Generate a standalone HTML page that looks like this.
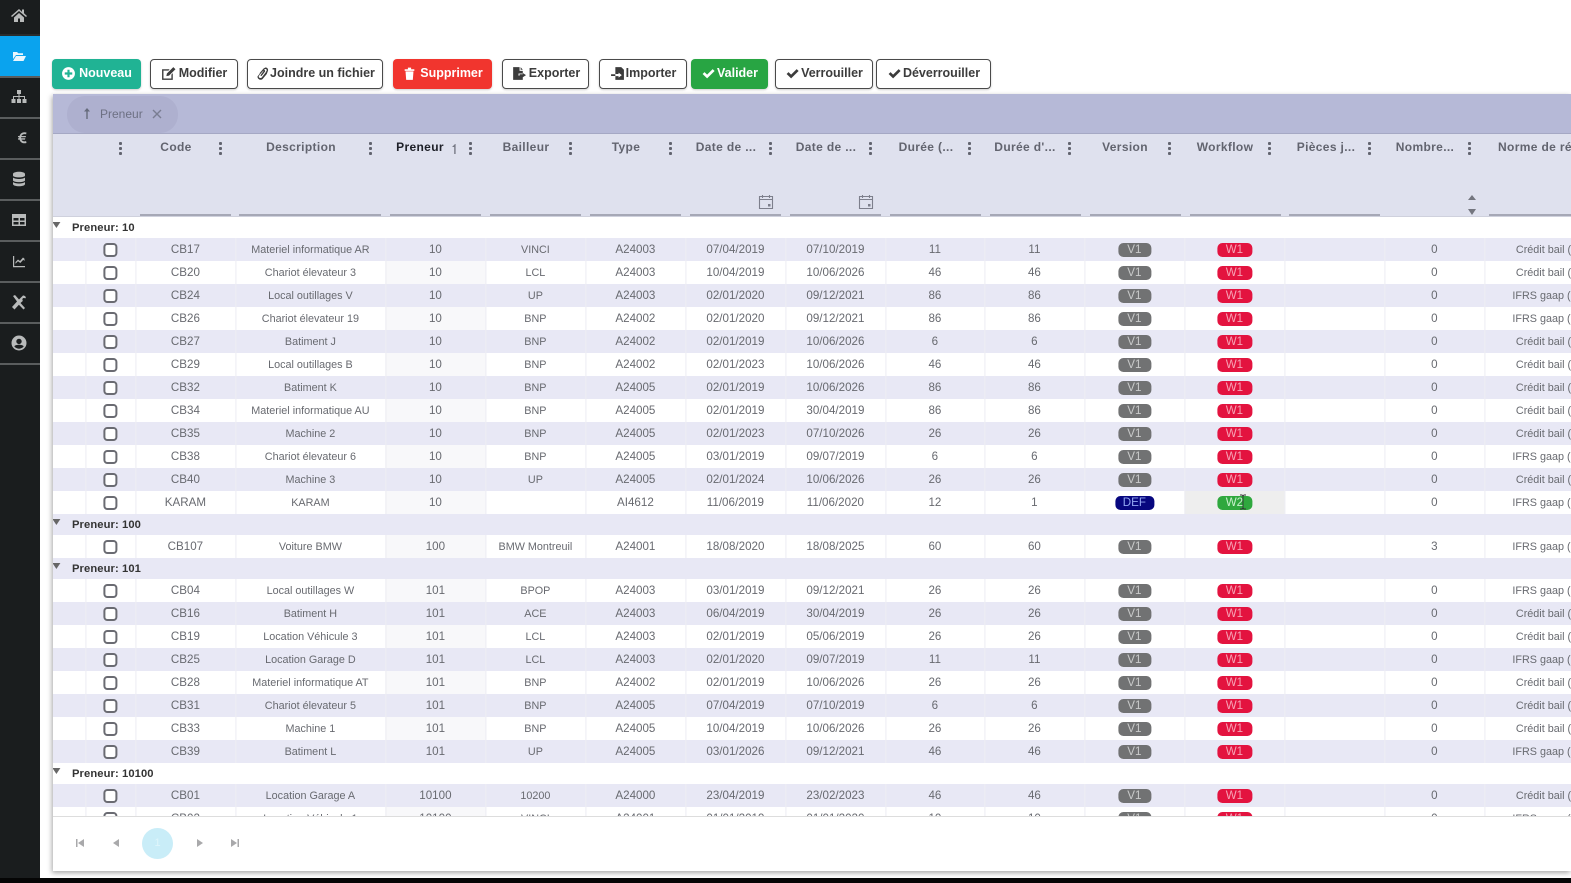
<!DOCTYPE html>
<html lang="fr"><head><meta charset="utf-8"><title>Contrats</title>
<style>
*{box-sizing:border-box}
html,body{margin:0;padding:0;width:1571px;height:883px;overflow:hidden;background:#fff;font-family:"Liberation Sans",sans-serif}
#all{position:absolute;left:0;top:0;width:1571px;height:883px;overflow:hidden;filter:blur(.35px)}
.a{position:absolute}
#side{left:0;top:0;width:40px;height:878px;background:#1a1d1e}
#blue{left:0;top:35px;width:40px;height:42px;background:#0aa3ee}
#foot{left:0;top:878px;width:1571px;height:5px;background:#050505}
#side2 u{position:absolute;left:0;width:40px;height:2px;background:#5a5d5e}
#side2 svg{position:absolute;left:10px;width:18px;height:18px;fill:#b8baba}
.b{position:absolute;top:59px;height:29.500px;padding-bottom:1px;border:1.5px solid #4a4a4a;border-radius:4px;background:#fff;color:#3c3c3c;font:bold 12.5px "Liberation Sans",sans-serif;display:flex;align-items:center;justify-content:center;gap:3px;white-space:nowrap;box-shadow:0 1px 2px rgba(0,0,0,.2)}
.b svg{width:15px;height:15px;fill:currentColor;flex:none}
.f{border:0;color:#fff}
#panel{left:53px;top:94px;width:1518px;height:777px;background:#fff;box-shadow:-1px 2px 5px rgba(0,0,0,.35)}
#band{left:53px;top:94px;width:1518px;height:40px;background:#b6b9d7;border-bottom:1px solid #a5a8c4}
#pill{left:67px;top:96px;width:111px;height:37px;border-radius:18px;background:#aeb0cf}
#hd{left:53px;top:134px;width:1518px;height:83px;background:#dfe1ee;border-bottom:1px solid #cfd1dd}
.h{position:absolute;top:138.500px;font:bold 12px/16px "Liberation Sans",sans-serif;letter-spacing:.35px;color:#62646f;transform:translateX(-50%);white-space:nowrap}
.m{position:absolute;top:142px;width:3px;height:13px;background:radial-gradient(circle at 1.5px 1.5px,#62646f 1.5px,transparent 1.6px) 0 0/3px 5px}
.l{position:absolute;top:214px;height:2px;background:#a6a8b6}
#wrap{left:53px;top:217px;width:1518px;height:600px;overflow:hidden;border-bottom:1px solid #ddd}
table{border-collapse:collapse;table-layout:fixed;width:1700px;font-size:11.6px;color:#686a70;transform:translateX(-.6px)}
td{padding:0;height:23px;text-align:center;white-space:nowrap;border-left:1px solid #ececf2;overflow:visible}
td:first-child{border-left:0}
td:nth-child(4),td:nth-child(6),td.c,td.i{font-size:10.8px}
tr{background:#fff}
tr:nth-child(even){background:#e8e8f5}
tr.g td{height:21px;border:0;text-align:left;font:bold 11.2px "Liberation Sans",sans-serif;letter-spacing:.1px;color:#333;padding:1px 0 0 19.600px;position:relative}
tr.g td:before{content:"";position:absolute;left:0;top:5px;border:4px solid transparent;border-top:6px solid #666;border-bottom:0}
tr:not(:nth-child(even)):not(.g) td:nth-child(5){background:#f8f8fa}
i{display:block;width:14px;height:14px;border:2px solid #6a6b72;border-radius:4px;margin:0 auto;background:#fff}
b{display:inline-block;font-weight:normal;height:14px;line-height:14px;border-radius:5px;font-size:11.6px;vertical-align:middle}
b.v{width:33px;background:#717273;color:#c9caca}
b.w{width:35px;background:#e3133f;color:#f6a3b5}
b.d{width:39px;background:#07077f;color:#93a7f2}
b.x{width:35px;background:#2fa83e;color:#c8efcc}
td.c{text-align:left;padding-left:31px}
td.i{text-align:left;padding-left:27.500px}
.p{position:absolute;fill:#a9a9ab}
</style></head><body><div id="all">

<div class="a" id="side"></div>
<div class="a" id="blue"></div>
<div class="a" id="side2" style="left:0;top:0;width:40px;height:380px">
<u style="top:34px;background:#2a2c2d"></u><u style="top:76px"></u><u style="top:117px"></u><u style="top:158px"></u><u style="top:199px"></u><u style="top:240px"></u><u style="top:281px"></u><u style="top:322px"></u><u style="top:363px"></u>
<svg style="top:6px" viewBox="0 0 18 18"><path d="M9 3 1 10l1 1 7-6 7 6 1-1-3-2.700V3.500h-2v2.400zM4 11.500V16h4v-3.500h2V16h4v-4.500L9 7z"/></svg>
<svg style="top:47px;fill:#eaf6fd" viewBox="0 0 18 18"><path d="M3 5h4l1.300 1.300H13V8H6L3 12zM6 9h10l-2.500 5H3z"/></svg>
<svg style="top:88px" viewBox="0 0 18 18"><path d="M7 2h4v4H9.500v2H15v3h1.500v4h-4v-4H14V9H9.500v2H11v4H7v-4h1.500V9H4v2h1.500v4h-4v-4H3V8h5.500V6H7z"/></svg>
<svg style="top:128px;left:13px" viewBox="0 0 18 18"><path d="M13.500 4.500c-3.500-1-6 .5-7 3.500H5v1.300h1.200v1H5v1.300h1.500c1 3 3.500 4.300 7 3.400l-.4-1.900c-2.300.6-3.900 0-4.700-1.500H12l.3-1.300H8.100v-1h4.600l.3-1.300H8.400c.8-1.600 2.500-2.200 4.700-1.600z"/></svg>
<svg style="top:170px" viewBox="0 0 18 18"><path d="M3 4c0-3 12-3 12 0v1.500c0 2.500-12 2.500-12 0zM3 7.500c2 2 10 2 12 0v2.800c0 2.500-12 2.500-12 0zM3 12c2 2 10 2 12 0v2c0 3-12 3-12 0z"/></svg>
<svg style="top:211px" viewBox="0 0 18 18"><path d="M2 3h14v12H2zM3.500 7v2.500h5V7zm6.500 0v2.500h4.500V7zM3.500 11v2.500h5V11zm6.500 0v2.500h4.500V11z" fill-rule="evenodd"/></svg>
<svg style="top:252px" viewBox="0 0 18 18"><path d="M3 4h1.200v10H15v1.200H3zM5.500 10l2.500-2.500 2 1.500 3-3.500 1.500 1.300V9l-1.200-1.300-3 3.300-2.300-1.700-2.500 2.500z"/></svg>
<svg style="top:293px" viewBox="0 0 18 18"><path d="M3 3l2-1 4 4.500L13 2.500c2 0 3 1.200 2.800 2.800l-2.500-.3-1 1 .5 2L10.500 10l4.500 5-1.500 1.500-4.600-4.700-4.400 4.700L2 14l5-5.500z"/></svg>
<svg style="top:334px" viewBox="0 0 18 18"><path d="M9 1.500a7.500 7.500 0 1 0 0 15 7.500 7.500 0 0 0 0-15zm0 3.200a2.700 2.700 0 1 1 0 5.400 2.700 2.700 0 0 1 0-5.400zm0 10c-2 0-3.700-.9-4.700-2.300.5-1.200 2.800-1.700 4.700-1.700s4.200.5 4.700 1.700c-1 1.400-2.700 2.300-4.700 2.300z" fill-rule="evenodd"/></svg>
</div>
<div class="a" id="foot"></div>

<div class="b f" style="left:52px;width:89px;background:#20b394"><svg viewBox="0 0 14 14"><path d="M7 1a6 6 0 1 0 0 12A6 6 0 0 0 7 1zm-1 2.500h2V6h2.500v2H8v2.500H6V8H3.500V6H6z" fill-rule="evenodd"/></svg>Nouveau</div>
<div class="b" style="left:150px;width:88px"><svg viewBox="0 0 14 14"><path d="M1 3h7L7 4.300H2.300v7.400h7.400V8L11 6.700V13H1zM11.500 1 13.500 3 7.500 9 5 9.500 5.500 7z"/></svg>Modifier</div>
<div class="b" style="left:247px;width:136px;gap:0"><svg viewBox="0 0 14 14"><path d="M9.500 1.500c1.500-.3 3 1 2.700 2.700L11 7.500 7 12.300c-1.500 1.300-4.700.3-4.700-2.500L7 4c1-1 2.500-.5 2.500 1L6 9.500 5 8.700l3-4c-.5-.5-1 0-1.300.3L3.500 9.500c-.3 1.500 1.500 2.200 2.700 1.300L10 6l1-2c0-1-1-1.500-2-1L5 7.500 4.200 6.800 8 2.300z"/></svg>Joindre un fichier</div>
<div class="b f" style="left:393px;width:99px;background:#f1352e;color:#fff"><svg viewBox="0 0 14 14"><path d="M2.500 3h9v1.500h-9zM5.500 1.500h3V3h-3zM3.300 5h7.400l-.6 8H3.900z"/></svg>Supprimer</div>
<div class="b" style="left:502px;width:87px"><svg viewBox="0 0 14 14"><path d="M2 1h6v3.500h3V7H7v2h4v4H2zM9 1l2 2.500H9zM11 6.500 14 8.500 11 10.500V9.300H8V7.700h3z"/></svg>Exporter</div>
<div class="b" style="left:599px;width:88px;gap:1px"><svg viewBox="0 0 14 14"><path d="M5 1h5.500L13 3.500V13H5V9.500h3v1.300l3-2.300-3-2.300v1.300H5zM1 7.700h4v1.600H1z"/></svg>Importer</div>
<div class="b f" style="left:691px;width:77px;background:#28a543;color:#fff;gap:1px"><svg viewBox="0 0 14 14"><path d="M1.500 7.500 3.300 5.700 5.700 8 10.900 2.900 12.700 4.700 5.700 11.500z"/></svg>Valider</div>
<div class="b" style="left:775px;width:98px;gap:1px"><svg viewBox="0 0 14 14"><path d="M1.500 7.500 3.300 5.700 5.700 8 10.900 2.900 12.700 4.700 5.700 11.500z"/></svg>Verrouiller</div>
<div class="b" style="left:876px;width:115px;gap:1px"><svg viewBox="0 0 14 14"><path d="M1.500 7.500 3.300 5.700 5.700 8 10.900 2.900 12.700 4.700 5.700 11.500z"/></svg>Déverrouiller</div>

<div class="a" id="panel"></div>
<div class="a" id="band"></div>
<div class="a" id="pill"></div>
<svg class="a" style="left:82px;top:107px;width:10px;height:13px" viewBox="0 0 10 13"><path d="M5 1 2 4.500h2.300V12h1.400V4.500H8z" fill="#666b7c"/></svg>
<div class="a" style="left:100px;top:106px;font-size:12px;line-height:16px;color:#6d7083">Preneur</div>
<svg class="a" style="left:152px;top:109px;width:10px;height:10px" viewBox="0 0 10 10"><path d="M1 1l8 8M9 1 1 9" stroke="#7a7d92" stroke-width="1.400"/></svg>

<div class="a" id="hd"></div>
<div class="h" style="left:176px">Code</div>
<div class="h" style="left:301px">Description</div>
<div class="h" style="left:420px;color:#1e2028">Preneur</div>
<div class="h" style="left:526px">Bailleur</div>
<div class="h" style="left:626px">Type</div>
<div class="h" style="left:726px">Date de ...</div>
<div class="h" style="left:826px">Date de ...</div>
<div class="h" style="left:926px">Durée (...</div>
<div class="h" style="left:1025px">Durée d'...</div>
<div class="h" style="left:1125px">Version</div>
<div class="h" style="left:1225px">Workflow</div>
<div class="h" style="left:1326px">Pièces j...</div>
<div class="h" style="left:1425px">Nombre...</div>
<div class="h" style="left:1498px;transform:none">Norme de référence</div>
<svg class="a" style="left:451px;top:142px;width:8px;height:13px" viewBox="0 0 8 13"><path d="M4 2 1 5h2.200v7h1.400V2z" fill="#777985"/></svg>
<div class="m" style="left:118.500px"></div><div class="m" style="left:218.500px"></div><div class="m" style="left:368.500px"></div><div class="m" style="left:468.500px"></div><div class="m" style="left:568.500px"></div><div class="m" style="left:668.500px"></div><div class="m" style="left:768.500px"></div><div class="m" style="left:868.500px"></div><div class="m" style="left:967.500px"></div><div class="m" style="left:1067.500px"></div><div class="m" style="left:1167.500px"></div><div class="m" style="left:1267.500px"></div><div class="m" style="left:1367.500px"></div><div class="m" style="left:1467.500px"></div>
<div class="l" style="left:140px;width:91px"></div><div class="l" style="left:239px;width:142px"></div><div class="l" style="left:390px;width:91px"></div><div class="l" style="left:490px;width:91px"></div><div class="l" style="left:590px;width:91px"></div><div class="l" style="left:690px;width:91px"></div><div class="l" style="left:790px;width:91px"></div><div class="l" style="left:890px;width:91px"></div><div class="l" style="left:990px;width:91px"></div><div class="l" style="left:1090px;width:91px"></div><div class="l" style="left:1190px;width:91px"></div><div class="l" style="left:1289px;width:91px"></div><div class="l" style="left:1489px;width:82px"></div>
<svg class="a" style="left:758px;top:194px;width:16px;height:16px" viewBox="0 0 16 16"><path d="M1.500 2.500h13v12h-13zM1.500 5.500h13M4.500 1v3M11.500 1v3" fill="none" stroke="#7d7f8c" stroke-width="1.100"/><rect x="10" y="10" width="2.500" height="2.500" fill="#7d7f8c"/></svg>
<svg class="a" style="left:858px;top:194px;width:16px;height:16px" viewBox="0 0 16 16"><path d="M1.500 2.500h13v12h-13zM1.500 5.500h13M4.500 1v3M11.500 1v3" fill="none" stroke="#7d7f8c" stroke-width="1.100"/><rect x="10" y="10" width="2.500" height="2.500" fill="#7d7f8c"/></svg>
<svg class="a" style="left:1467px;top:194px;width:10px;height:22px" viewBox="0 0 10 22"><path d="M5 1 9 6H1zM1 15h8l-4 6z" fill="#74767f"/></svg>

<div class="a" id="wrap"><table>
<colgroup><col style="width:33px"><col style="width:50px"><col style="width:100px"><col style="width:150px"><col style="width:100px"><col style="width:100px"><col style="width:100px"><col style="width:100px"><col style="width:100px"><col style="width:99px"><col style="width:100px"><col style="width:100px"><col style="width:100px"><col style="width:100px"><col style="width:100px"><col style="width:268px"></colgroup>
<tbody>
<tr class="g"><td colspan="16">Preneur: 10</td></tr>
<tr><td></td><td><i></i></td><td>CB17</td><td>Materiel informatique AR</td><td>10</td><td>VINCI</td><td>A24003</td><td>07/04/2019</td><td>07/10/2019</td><td>11</td><td>11</td><td><b class="v">V1</b></td><td><b class="w">W1</b></td><td></td><td>0</td><td class="c">Crédit bail (IFRS 16)</td></tr>
<tr><td></td><td><i></i></td><td>CB20</td><td>Chariot élevateur 3</td><td>10</td><td>LCL</td><td>A24003</td><td>10/04/2019</td><td>10/06/2026</td><td>46</td><td>46</td><td><b class="v">V1</b></td><td><b class="w">W1</b></td><td></td><td>0</td><td class="c">Crédit bail (IFRS 16)</td></tr>
<tr><td></td><td><i></i></td><td>CB24</td><td>Local outillages V</td><td>10</td><td>UP</td><td>A24003</td><td>02/01/2020</td><td>09/12/2021</td><td>86</td><td>86</td><td><b class="v">V1</b></td><td><b class="w">W1</b></td><td></td><td>0</td><td class="i">IFRS gaap (IFRS 16)</td></tr>
<tr><td></td><td><i></i></td><td>CB26</td><td>Chariot élevateur 19</td><td>10</td><td>BNP</td><td>A24002</td><td>02/01/2020</td><td>09/12/2021</td><td>86</td><td>86</td><td><b class="v">V1</b></td><td><b class="w">W1</b></td><td></td><td>0</td><td class="i">IFRS gaap (IFRS 16)</td></tr>
<tr><td></td><td><i></i></td><td>CB27</td><td>Batiment J</td><td>10</td><td>BNP</td><td>A24002</td><td>02/01/2019</td><td>10/06/2026</td><td>6</td><td>6</td><td><b class="v">V1</b></td><td><b class="w">W1</b></td><td></td><td>0</td><td class="c">Crédit bail (IFRS 16)</td></tr>
<tr><td></td><td><i></i></td><td>CB29</td><td>Local outillages B</td><td>10</td><td>BNP</td><td>A24002</td><td>02/01/2023</td><td>10/06/2026</td><td>46</td><td>46</td><td><b class="v">V1</b></td><td><b class="w">W1</b></td><td></td><td>0</td><td class="c">Crédit bail (IFRS 16)</td></tr>
<tr><td></td><td><i></i></td><td>CB32</td><td>Batiment K</td><td>10</td><td>BNP</td><td>A24005</td><td>02/01/2019</td><td>10/06/2026</td><td>86</td><td>86</td><td><b class="v">V1</b></td><td><b class="w">W1</b></td><td></td><td>0</td><td class="c">Crédit bail (IFRS 16)</td></tr>
<tr><td></td><td><i></i></td><td>CB34</td><td>Materiel informatique AU</td><td>10</td><td>BNP</td><td>A24005</td><td>02/01/2019</td><td>30/04/2019</td><td>86</td><td>86</td><td><b class="v">V1</b></td><td><b class="w">W1</b></td><td></td><td>0</td><td class="c">Crédit bail (IFRS 16)</td></tr>
<tr><td></td><td><i></i></td><td>CB35</td><td>Machine 2</td><td>10</td><td>BNP</td><td>A24005</td><td>02/01/2023</td><td>07/10/2026</td><td>26</td><td>26</td><td><b class="v">V1</b></td><td><b class="w">W1</b></td><td></td><td>0</td><td class="c">Crédit bail (IFRS 16)</td></tr>
<tr><td></td><td><i></i></td><td>CB38</td><td>Chariot élevateur 6</td><td>10</td><td>BNP</td><td>A24005</td><td>03/01/2019</td><td>09/07/2019</td><td>6</td><td>6</td><td><b class="v">V1</b></td><td><b class="w">W1</b></td><td></td><td>0</td><td class="i">IFRS gaap (IFRS 16)</td></tr>
<tr><td></td><td><i></i></td><td>CB40</td><td>Machine 3</td><td>10</td><td>UP</td><td>A24005</td><td>02/01/2024</td><td>10/06/2026</td><td>26</td><td>26</td><td><b class="v">V1</b></td><td><b class="w">W1</b></td><td></td><td>0</td><td class="c">Crédit bail (IFRS 16)</td></tr>
<tr><td></td><td><i></i></td><td>KARAM</td><td>KARAM</td><td>10</td><td></td><td>AI4612</td><td>11/06/2019</td><td>11/06/2020</td><td>12</td><td>1</td><td><b class="d">DEF</b></td><td style="background:#eeeeee"><b class="x">W2</b></td><td></td><td>0</td><td class="i">IFRS gaap (IFRS 16)</td></tr>
<tr class="g"><td colspan="16">Preneur: 100</td></tr>
<tr><td></td><td><i></i></td><td>CB107</td><td>Voiture BMW</td><td>100</td><td>BMW Montreuil</td><td>A24001</td><td>18/08/2020</td><td>18/08/2025</td><td>60</td><td>60</td><td><b class="v">V1</b></td><td><b class="w">W1</b></td><td></td><td>3</td><td class="i">IFRS gaap (IFRS 16)</td></tr>
<tr class="g"><td colspan="16">Preneur: 101</td></tr>
<tr><td></td><td><i></i></td><td>CB04</td><td>Local outillages W</td><td>101</td><td>BPOP</td><td>A24003</td><td>03/01/2019</td><td>09/12/2021</td><td>26</td><td>26</td><td><b class="v">V1</b></td><td><b class="w">W1</b></td><td></td><td>0</td><td class="i">IFRS gaap (IFRS 16)</td></tr>
<tr><td></td><td><i></i></td><td>CB16</td><td>Batiment H</td><td>101</td><td>ACE</td><td>A24003</td><td>06/04/2019</td><td>30/04/2019</td><td>26</td><td>26</td><td><b class="v">V1</b></td><td><b class="w">W1</b></td><td></td><td>0</td><td class="c">Crédit bail (IFRS 16)</td></tr>
<tr><td></td><td><i></i></td><td>CB19</td><td>Location Véhicule 3</td><td>101</td><td>LCL</td><td>A24003</td><td>02/01/2019</td><td>05/06/2019</td><td>26</td><td>26</td><td><b class="v">V1</b></td><td><b class="w">W1</b></td><td></td><td>0</td><td class="c">Crédit bail (IFRS 16)</td></tr>
<tr><td></td><td><i></i></td><td>CB25</td><td>Location Garage D</td><td>101</td><td>LCL</td><td>A24003</td><td>02/01/2020</td><td>09/07/2019</td><td>11</td><td>11</td><td><b class="v">V1</b></td><td><b class="w">W1</b></td><td></td><td>0</td><td class="i">IFRS gaap (IFRS 16)</td></tr>
<tr><td></td><td><i></i></td><td>CB28</td><td>Materiel informatique AT</td><td>101</td><td>BNP</td><td>A24002</td><td>02/01/2019</td><td>10/06/2026</td><td>26</td><td>26</td><td><b class="v">V1</b></td><td><b class="w">W1</b></td><td></td><td>0</td><td class="c">Crédit bail (IFRS 16)</td></tr>
<tr><td></td><td><i></i></td><td>CB31</td><td>Chariot élevateur 5</td><td>101</td><td>BNP</td><td>A24005</td><td>07/04/2019</td><td>07/10/2019</td><td>6</td><td>6</td><td><b class="v">V1</b></td><td><b class="w">W1</b></td><td></td><td>0</td><td class="c">Crédit bail (IFRS 16)</td></tr>
<tr><td></td><td><i></i></td><td>CB33</td><td>Machine 1</td><td>101</td><td>BNP</td><td>A24005</td><td>10/04/2019</td><td>10/06/2026</td><td>26</td><td>26</td><td><b class="v">V1</b></td><td><b class="w">W1</b></td><td></td><td>0</td><td class="c">Crédit bail (IFRS 16)</td></tr>
<tr><td></td><td><i></i></td><td>CB39</td><td>Batiment L</td><td>101</td><td>UP</td><td>A24005</td><td>03/01/2026</td><td>09/12/2021</td><td>46</td><td>46</td><td><b class="v">V1</b></td><td><b class="w">W1</b></td><td></td><td>0</td><td class="i">IFRS gaap (IFRS 16)</td></tr>
<tr class="g"><td colspan="16">Preneur: 10100</td></tr>
<tr><td></td><td><i></i></td><td>CB01</td><td>Location Garage A</td><td>10100</td><td>10200</td><td>A24000</td><td>23/04/2019</td><td>23/02/2023</td><td>46</td><td>46</td><td><b class="v">V1</b></td><td><b class="w">W1</b></td><td></td><td>0</td><td class="c">Crédit bail (IFRS 16)</td></tr>
<tr><td></td><td><i></i></td><td>CB02</td><td>Location Véhicule 1</td><td>10100</td><td>VINCI</td><td>A24001</td><td>01/01/2019</td><td>01/01/2020</td><td>10</td><td>10</td><td><b class="v">V1</b></td><td><b class="w">W1</b></td><td></td><td>0</td><td class="i">IFRS gaap (IFRS 16)</td></tr>
</tbody></table></div>

<svg class="a" style="left:1239px;top:494px;width:8px;height:16px" viewBox="0 0 8 16"><path d="M1 1h2l1 1 1-1h2M4 2v12M1 15h2l1-1 1 1h2" fill="none" stroke="#333" stroke-width=".9"/></svg>

<div class="a" style="left:142px;top:828px;width:31px;height:31px;border-radius:50%;background:#c9edf8;color:#dff5fb;font-size:11px;line-height:30px;text-align:center">1</div>
<svg class="p" style="left:75px;top:837px;width:10px;height:12px" viewBox="0 0 10 12"><path d="M1 2h1.500v8H1zM9 2v8L3 6z"/></svg>
<svg class="p" style="left:112px;top:837px;width:8px;height:12px" viewBox="0 0 8 12"><path d="M7 2v8L1 6z"/></svg>
<svg class="p" style="left:196px;top:837px;width:8px;height:12px" viewBox="0 0 8 12"><path d="M1 2v8l6-4z"/></svg>
<svg class="p" style="left:230px;top:837px;width:10px;height:12px" viewBox="0 0 10 12"><path d="M1 2v8l6-4zM7.500 2H9v8H7.500z"/></svg>
</div></body></html>
